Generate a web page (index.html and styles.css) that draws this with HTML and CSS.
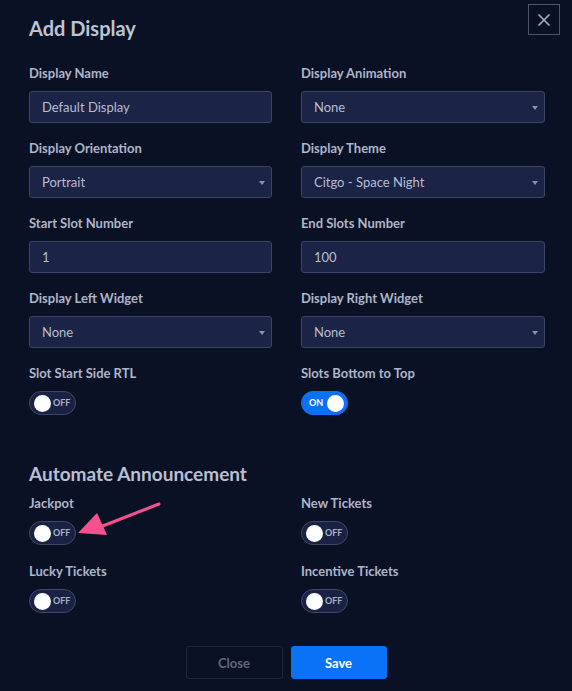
FILE: index.html
```html
<!DOCTYPE html>
<html>
<head>
<meta charset="utf-8">
<link rel="stylesheet" href="styles.css">
</head>
<body>
<div class="modal">
  <button class="close-x" aria-label="Close">
    <svg width="14" height="14" viewBox="0 0 14 14"><path d="M1.5 1.5 L12.5 12.5 M12.5 1.5 L1.5 12.5" stroke="#a9b0c4" stroke-width="1.6" fill="none"/></svg>
  </button>
  <h1 class="title">Add Display</h1>
  <div class="grid">
    <div class="field">
      <div class="label">Display Name</div>
      <div class="input">Default Display</div>
    </div>
    <div class="field">
      <div class="label">Display Animation</div>
      <div class="input select">None</div>
    </div>
    <div class="field">
      <div class="label">Display Orientation</div>
      <div class="input select">Portrait</div>
    </div>
    <div class="field">
      <div class="label">Display Theme</div>
      <div class="input select">Citgo - Space Night</div>
    </div>
    <div class="field">
      <div class="label">Start Slot Number</div>
      <div class="input">1</div>
    </div>
    <div class="field">
      <div class="label">End Slots Number</div>
      <div class="input">100</div>
    </div>
    <div class="field">
      <div class="label">Display Left Widget</div>
      <div class="input select">None</div>
    </div>
    <div class="field">
      <div class="label">Display Right Widget</div>
      <div class="input select">None</div>
    </div>
    <div class="field">
      <div class="label">Slot Start Side RTL</div>
      <div class="toggle off"><span class="knob"></span><span class="tt">OFF</span></div>
    </div>
    <div class="field">
      <div class="label">Slots Bottom to Top</div>
      <div class="toggle on"><span class="tt">ON</span><span class="knob"></span></div>
    </div>
  </div>
  <h2 class="section">Automate Announcement</h2>
  <div class="grid grid2">
    <div class="field jackpot">
      <div class="label">Jackpot</div>
      <div class="toggle off"><span class="knob"></span><span class="tt">OFF</span></div>
      <svg class="arrow" width="90" height="40" viewBox="0 0 90 40">
        <path d="M82 2 L18 27" stroke="#f6518c" stroke-width="3" stroke-linecap="round" fill="none"/>
        <path d="M1 31 L20 11 L30 33 Z" fill="#f6518c"/>
      </svg>
    </div>
    <div class="field">
      <div class="label">New Tickets</div>
      <div class="toggle off"><span class="knob"></span><span class="tt">OFF</span></div>
    </div>
    <div class="field">
      <div class="label">Lucky Tickets</div>
      <div class="toggle off"><span class="knob"></span><span class="tt">OFF</span></div>
    </div>
    <div class="field">
      <div class="label">Incentive Tickets</div>
      <div class="toggle off"><span class="knob"></span><span class="tt">OFF</span></div>
    </div>
  </div>
  <div class="actions">
    <button class="btn btn-close">Close</button>
    <button class="btn btn-save">Save</button>
  </div>
</div>
</body>
</html>
```
FILE: styles.css
```css
* { box-sizing: border-box; }
html, body {
  margin: 0;
  padding: 0;
  background: #0b1124;
}
body {
  font-family: Lato, "Open Sans", sans-serif;
  color: #b4bbcf;
  width: 572px;
  height: 691px;
  overflow: hidden;
}
.modal {
  position: relative;
  padding: 16px 27px 0 29px;
}
.close-x {
  position: absolute;
  top: 4px;
  right: 12px;
  width: 32px;
  height: 31px;
  background: transparent;
  border: 1px solid #4e5568;
  display: flex;
  align-items: center;
  justify-content: center;
  padding: 0;
}
.title {
  margin: 0 0 25px 0;
  font-size: 20px;
  line-height: 24px;
  font-weight: 700;
  color: #bcc3d7;
}
.grid {
  display: grid;
  grid-template-columns: 243px 244px;
  column-gap: 29px;
  row-gap: 17px;
}
.label {
  font-size: 13px;
  line-height: 16px;
  font-weight: 700;
  color: #aeb5ca;
  margin-bottom: 10px;
}
.input {
  position: relative;
  height: 32px;
  border: 1px solid #3a4467;
  border-radius: 3px;
  background: #1b2347;
  font-size: 13px;
  line-height: 30px;
  padding-left: 12px;
  color: #b8bed2;
}
.select::after {
  content: "";
  position: absolute;
  right: 6px;
  top: 14px;
  border-left: 3.5px solid transparent;
  border-right: 3.5px solid transparent;
  border-top: 4px solid #8d93a8;
}
.toggle {
  margin-top: 2px;
  width: 47px;
  height: 24px;
  border-radius: 12px;
  display: flex;
  align-items: center;
  gap: 2px;
}
.toggle.off {
  background: #1a2244;
  border: 1px solid #3f4869;
  padding-left: 4px;
}
.toggle.on {
  background: #0a72f7;
  border: 1px solid #0a72f7;
  padding-left: 7px;
  gap: 4px;
}
.knob {
  width: 17px;
  height: 17px;
  border-radius: 50%;
  background: #ffffff;
}
.tt {
  font-size: 9px;
  font-weight: 700;
  line-height: 10px;
  color: #aab1c6;
}
.toggle.on .tt { color: #ffffff; }
.section {
  margin: 47px 0 9px 0;
  font-size: 19px;
  line-height: 24px;
  font-weight: 700;
  color: #b8bfd4;
}
.grid2 { row-gap: 18px; }
.jackpot { position: relative; }
.arrow {
  position: absolute;
  left: 48px;
  top: 7px;
}
.actions {
  display: flex;
  justify-content: center;
  gap: 8px;
  margin-top: 33px;
  margin-left: -2px;
}
.btn {
  height: 33px;
  width: 97px;
  border-radius: 3px;
  font-family: Lato, "Open Sans", sans-serif;
  font-size: 13px;
  font-weight: 700;
  padding: 0;
}
.btn-close {
  background: transparent;
  border: 1px solid #1c2440;
  color: #5f6780;
}
.btn-save {
  width: 96px;
  background: #0a72f7;
  border: 1px solid #0a72f7;
  color: #ffffff;
}
```
